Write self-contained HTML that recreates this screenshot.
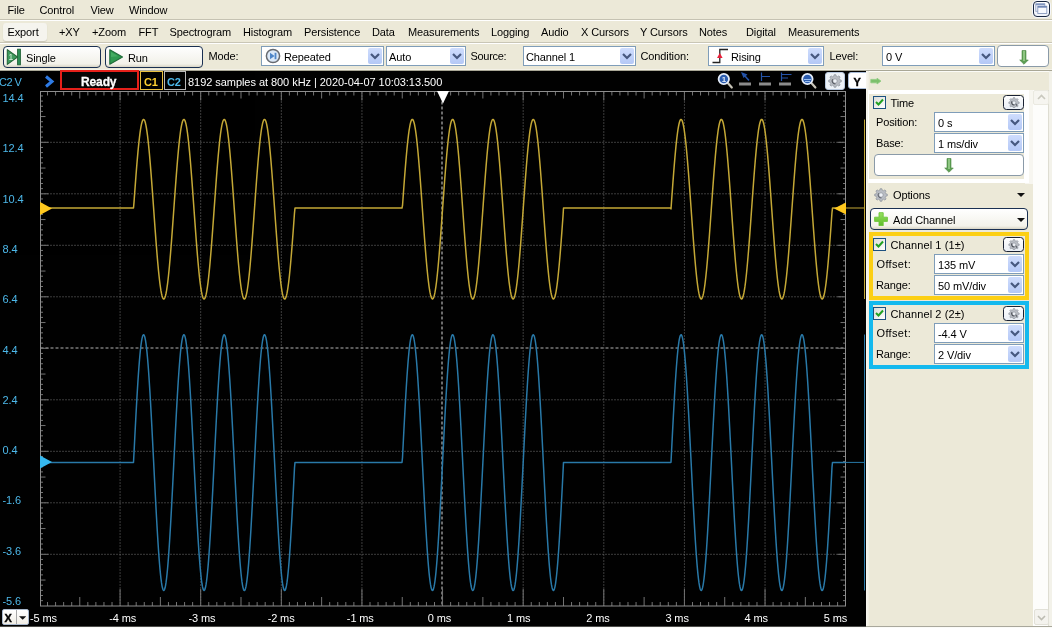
<!DOCTYPE html><html><head><meta charset="utf-8"><title>WaveForms Scope</title><style>
html,body{margin:0;padding:0}
body{width:1052px;height:628px;position:relative;overflow:hidden;background:#ECE9D8;font-family:"Liberation Sans",sans-serif;font-size:11px;color:#000;line-height:13px}
.t{position:absolute;white-space:pre;line-height:13px;height:13px;letter-spacing:-0.12px}
.b{position:absolute;box-sizing:border-box}
.hl{position:absolute;height:1px;left:0;width:1052px}
.combo{position:absolute;box-sizing:border-box;background:#fff;border:1px solid #7F9DB9;height:20px}
.combo .dd{position:absolute;right:1px;top:1px;bottom:1px;width:14px;background:#C1D2FA;border-radius:2px;background:linear-gradient(#CFDDFD,#B4C8F6)}
.combo .dd svg{position:absolute;left:2px;top:5px}
.combo .v{position:absolute;left:4px;top:3px;white-space:pre;letter-spacing:-0.12px}
.btn{position:absolute;box-sizing:border-box;border:1.2px solid #1A3052;border-radius:4px;background:linear-gradient(#FFFFFF,#F3F2EA 85%,#D8D4C4)}
.wbtn{position:absolute;box-sizing:border-box;border:1px solid #8A9AA8;border-radius:4px;background:#fff}
.cb{position:absolute;box-sizing:border-box;width:13px;height:13px;border:1px solid #1C5180;background:linear-gradient(135deg,#DCDCD7,#fff)}
.cb svg{position:absolute;left:1px;top:1px}
.gbtn{position:absolute;box-sizing:border-box;width:21px;height:15px;border:1.3px solid #1A2234;border-radius:3.5px;background:linear-gradient(#FFFFFF,#E9EEF5)}
</style></head><body><div id="app" style="position:absolute;left:0;top:0;width:1052px;height:628px;overflow:hidden;will-change:opacity;opacity:0.999">
<span class="t" style="left:7.5px;top:4px;">File</span>
<span class="t" style="left:39.5px;top:4px;">Control</span>
<span class="t" style="left:90.5px;top:4px;">View</span>
<span class="t" style="left:129px;top:4px;">Window</span>
<div class="hl" style="top:19px;background:#C5C2B2"></div>
<div class="hl" style="top:20px;background:#FFFFFF"></div>
<div class="b" style="left:1032px;top:0px;width:19px;height:18px;border-radius:5px;background:#F4F6FA"></div>
<div class="b" style="left:1033px;top:1px;width:17px;height:16px;border:1.3px solid #1A2840;border-radius:4px;background:linear-gradient(#FFFFFF,#EEF2FA)"></div>
<svg class="b" style="left:1033px;top:1px" width="17" height="16" viewBox="0 0 17 16"><rect x="2.8" y="2.8" width="9" height="7.5" fill="#F2F5FB" stroke="#93A3C4" stroke-width="0.9"/><rect x="2.8" y="2.6" width="9" height="1.6" fill="#8196C0"/><rect x="4.8" y="5.2" width="9" height="7.3" fill="#F7F9FD" stroke="#8A9BBE" stroke-width="0.9"/><rect x="4.8" y="5" width="9" height="1.7" fill="#6F86B4"/></svg>
<div class="b" style="left:3px;top:23px;width:44px;height:18px;border-radius:3px;background:#F6F5EF;box-shadow:0 1px 1px #C9C6B6"></div>
<span class="t" style="left:7.5px;top:26px;">Export</span>
<span class="t" style="left:59px;top:26px;">+XY</span>
<span class="t" style="left:92px;top:26px;">+Zoom</span>
<span class="t" style="left:138.5px;top:26px;">FFT</span>
<span class="t" style="left:169.5px;top:26px;">Spectrogram</span>
<span class="t" style="left:243px;top:26px;">Histogram</span>
<span class="t" style="left:304px;top:26px;">Persistence</span>
<span class="t" style="left:372px;top:26px;">Data</span>
<span class="t" style="left:408px;top:26px;">Measurements</span>
<span class="t" style="left:491px;top:26px;">Logging</span>
<span class="t" style="left:541px;top:26px;">Audio</span>
<span class="t" style="left:581px;top:26px;">X Cursors</span>
<span class="t" style="left:640px;top:26px;">Y Cursors</span>
<span class="t" style="left:699px;top:26px;">Notes</span>
<span class="t" style="left:746px;top:26px;">Digital</span>
<span class="t" style="left:788px;top:26px;">Measurements</span>
<div class="hl" style="top:42px;background:#C9C6B6"></div>
<div class="hl" style="top:43px;background:#FFFFFF"></div>
<div class="btn" style="left:3px;top:46px;width:98px;height:22px"></div>
<div class="btn" style="left:105px;top:46px;width:98px;height:22px"></div>
<svg class="b" style="left:6px;top:48px" width="16" height="18" viewBox="0 0 16 18"><path d="M1.3 1.6 L11.5 9 L1.3 16.4 Z" fill="#3F9A5E" stroke="#27683A" stroke-width="1.1" stroke-linejoin="round"/><rect x="11.6" y="1.2" width="2.8" height="15.6" fill="#2F9058" stroke="#1F6236" stroke-width="0.9"/><text x="2.6" y="12.2" font-size="8.5" font-family="Liberation Sans, sans-serif" fill="#D8F0DC">1</text></svg>
<span class="t" style="left:26px;top:51.5px;">Single</span>
<svg class="b" style="left:108px;top:48px" width="18" height="18" viewBox="0 0 18 18"><path d="M1.8 1.8 L14.5 9 L1.8 16.2 Z" fill="#2F9A50" stroke="#1F6B38" stroke-width="1.1" stroke-linejoin="round"/><path d="M3 4 L10 8.2 L3 9 Z" fill="#4DB36A" opacity="0.7"/></svg>
<span class="t" style="left:128px;top:51.5px;">Run</span>
<span class="t" style="left:208.5px;top:50px;">Mode:</span>
<div class="combo" style="left:261px;top:46px;width:123px;height:20px"><span class="v" style="left:22px;top:3.5px">Repeated</span><div class="dd"><svg width="10" height="7" viewBox="0 0 10 7"><path d="M1 1 L5 5 L9 1" fill="none" stroke="#46587F" stroke-width="2.2"/></svg></div></div>
<svg class="b" style="left:265px;top:48px" width="16" height="16" viewBox="0 0 16 16"><circle cx="8" cy="8" r="6.6" fill="#DCE9F8" stroke="#666A70" stroke-width="1.5"/><path d="M5 4.8 L9.6 8 L5 11.2 Z" fill="#4F86C8"/><rect x="9.6" y="4.8" width="1.8" height="6.4" fill="#4F86C8"/></svg>
<div class="combo" style="left:386px;top:46px;width:80px;height:20px"><span class="v" style="left:2px;top:3.5px">Auto</span><div class="dd"><svg width="10" height="7" viewBox="0 0 10 7"><path d="M1 1 L5 5 L9 1" fill="none" stroke="#46587F" stroke-width="2.2"/></svg></div></div>
<span class="t" style="left:470.5px;top:50px;letter-spacing:-0.3px">Source:</span>
<div class="combo" style="left:523px;top:46px;width:113px;height:20px"><span class="v" style="left:2px;top:3.5px">Channel 1</span><div class="dd"><svg width="10" height="7" viewBox="0 0 10 7"><path d="M1 1 L5 5 L9 1" fill="none" stroke="#46587F" stroke-width="2.2"/></svg></div></div>
<span class="t" style="left:640.5px;top:50px;">Condition:</span>
<div class="combo" style="left:708px;top:46px;width:116px;height:20px"><span class="v" style="left:22px;top:3.5px">Rising</span><div class="dd"><svg width="10" height="7" viewBox="0 0 10 7"><path d="M1 1 L5 5 L9 1" fill="none" stroke="#46587F" stroke-width="2.2"/></svg></div></div>
<svg class="b" style="left:711px;top:48px" width="20" height="17" viewBox="0 0 20 17"><path d="M1.5 14.5 H8.8 V1.5 H17" fill="none" stroke="#222" stroke-width="1.3"/><path d="M8.8 5 L6 10 H11.6 Z" fill="#E8203A"/></svg>
<span class="t" style="left:829.5px;top:50px;">Level:</span>
<div class="combo" style="left:882px;top:46px;width:113px;height:20px"><span class="v" style="left:3px;top:3.5px">0 V</span><div class="dd"><svg width="10" height="7" viewBox="0 0 10 7"><path d="M1 1 L5 5 L9 1" fill="none" stroke="#46587F" stroke-width="2.2"/></svg></div></div>
<div class="wbtn" style="left:997px;top:45px;width:52px;height:22px"></div>
<svg class="b" style="left:1019px;top:49.5px" width="10" height="15" viewBox="0 0 10 15"><path d="M3 0.5 H7 V10 H9.3 L5 14.3 L0.7 10 H3 Z" fill="#5E9E54" stroke="#4C8A44" stroke-width="0.6" stroke-linejoin="round"/><rect x="4.2" y="1" width="1.6" height="10" fill="#9BD08E"/></svg>
<div class="hl" style="top:69px;background:#F4F2E8"></div>
<div class="hl" style="top:70px;background:#A9A796"></div>
<div class="b" style="left:0;top:71px;width:866px;height:555px;background:#000"></div>
<div class="hl" style="top:626px;background:#4C4C4A"></div>
<div class="hl" style="top:627px;background:#FBFBF8"></div>
<svg class="b" style="left:0;top:0" width="1052" height="628" viewBox="0 0 1052 628">
<path d="M442 91.5 V606 M40.5 348 H845.5" fill="none" stroke="#B4B4B4" stroke-width="1.2" stroke-dasharray="3 2"/>
<path d="M120.08 92.5 V606 M200.7 92.5 V606 M281.32 92.5 V606 M361.94 92.5 V606 M523.18 92.5 V606 M603.8 92.5 V606 M684.42 92.5 V606 M765.04 92.5 V606" fill="none" stroke="#7A7A7A" stroke-dasharray="1 2"/>
<path d="M41.5 142.3 H845.5 M41.5 193.8 H845.5 M41.5 245.3 H845.5 M41.5 296.8 H845.5 M41.5 399.8 H845.5 M41.5 451.3 H845.5 M41.5 502.8 H845.5 M41.5 554.3 H845.5" fill="none" stroke="#7A7A7A" stroke-dasharray="1 2"/>
<path d="M47.52 91.5 v4 M47.52 606 v-4 M40.5 95.95 h2.5 M845.5 95.95 h-2.5 M55.58 91.5 v4 M55.58 606 v-4 M40.5 101.1 h2.5 M845.5 101.1 h-2.5 M63.65 91.5 v4 M63.65 606 v-4 M40.5 106.25 h2.5 M845.5 106.25 h-2.5 M71.71 91.5 v4 M71.71 606 v-4 M40.5 111.4 h2.5 M845.5 111.4 h-2.5 M79.77 91.5 v7 M79.77 606 v-9 M40.5 116.55 h5 M845.5 116.55 h-5 M87.83 91.5 v4 M87.83 606 v-4 M40.5 121.7 h2.5 M845.5 121.7 h-2.5 M95.89 91.5 v4 M95.89 606 v-4 M40.5 126.85 h2.5 M845.5 126.85 h-2.5 M103.96 91.5 v4 M103.96 606 v-4 M40.5 132.0 h2.5 M845.5 132.0 h-2.5 M112.02 91.5 v4 M112.02 606 v-4 M40.5 137.15 h2.5 M845.5 137.15 h-2.5 M120.08 91.5 v9 M120.08 606 v-17 M40.5 142.3 h8 M845.5 142.3 h-8 M128.14 91.5 v4 M128.14 606 v-4 M40.5 147.45 h2.5 M845.5 147.45 h-2.5 M136.2 91.5 v4 M136.2 606 v-4 M40.5 152.6 h2.5 M845.5 152.6 h-2.5 M144.27 91.5 v4 M144.27 606 v-4 M40.5 157.75 h2.5 M845.5 157.75 h-2.5 M152.33 91.5 v4 M152.33 606 v-4 M40.5 162.9 h2.5 M845.5 162.9 h-2.5 M160.39 91.5 v7 M160.39 606 v-9 M40.5 168.05 h5 M845.5 168.05 h-5 M168.45 91.5 v4 M168.45 606 v-4 M40.5 173.2 h2.5 M845.5 173.2 h-2.5 M176.51 91.5 v4 M176.51 606 v-4 M40.5 178.35 h2.5 M845.5 178.35 h-2.5 M184.58 91.5 v4 M184.58 606 v-4 M40.5 183.5 h2.5 M845.5 183.5 h-2.5 M192.64 91.5 v4 M192.64 606 v-4 M40.5 188.65 h2.5 M845.5 188.65 h-2.5 M200.7 91.5 v9 M200.7 606 v-17 M40.5 193.8 h8 M845.5 193.8 h-8 M208.76 91.5 v4 M208.76 606 v-4 M40.5 198.95 h2.5 M845.5 198.95 h-2.5 M216.82 91.5 v4 M216.82 606 v-4 M40.5 204.1 h2.5 M845.5 204.1 h-2.5 M224.89 91.5 v4 M224.89 606 v-4 M40.5 209.25 h2.5 M845.5 209.25 h-2.5 M232.95 91.5 v4 M232.95 606 v-4 M40.5 214.4 h2.5 M845.5 214.4 h-2.5 M241.01 91.5 v7 M241.01 606 v-9 M40.5 219.55 h5 M845.5 219.55 h-5 M249.07 91.5 v4 M249.07 606 v-4 M40.5 224.7 h2.5 M845.5 224.7 h-2.5 M257.13 91.5 v4 M257.13 606 v-4 M40.5 229.85 h2.5 M845.5 229.85 h-2.5 M265.2 91.5 v4 M265.2 606 v-4 M40.5 235.0 h2.5 M845.5 235.0 h-2.5 M273.26 91.5 v4 M273.26 606 v-4 M40.5 240.15 h2.5 M845.5 240.15 h-2.5 M281.32 91.5 v9 M281.32 606 v-17 M40.5 245.3 h8 M845.5 245.3 h-8 M289.38 91.5 v4 M289.38 606 v-4 M40.5 250.45 h2.5 M845.5 250.45 h-2.5 M297.44 91.5 v4 M297.44 606 v-4 M40.5 255.6 h2.5 M845.5 255.6 h-2.5 M305.51 91.5 v4 M305.51 606 v-4 M40.5 260.75 h2.5 M845.5 260.75 h-2.5 M313.57 91.5 v4 M313.57 606 v-4 M40.5 265.9 h2.5 M845.5 265.9 h-2.5 M321.63 91.5 v7 M321.63 606 v-9 M40.5 271.05 h5 M845.5 271.05 h-5 M329.69 91.5 v4 M329.69 606 v-4 M40.5 276.2 h2.5 M845.5 276.2 h-2.5 M337.75 91.5 v4 M337.75 606 v-4 M40.5 281.35 h2.5 M845.5 281.35 h-2.5 M345.82 91.5 v4 M345.82 606 v-4 M40.5 286.5 h2.5 M845.5 286.5 h-2.5 M353.88 91.5 v4 M353.88 606 v-4 M40.5 291.65 h2.5 M845.5 291.65 h-2.5 M361.94 91.5 v9 M361.94 606 v-17 M40.5 296.8 h8 M845.5 296.8 h-8 M370.0 91.5 v4 M370.0 606 v-4 M40.5 301.95 h2.5 M845.5 301.95 h-2.5 M378.06 91.5 v4 M378.06 606 v-4 M40.5 307.1 h2.5 M845.5 307.1 h-2.5 M386.13 91.5 v4 M386.13 606 v-4 M40.5 312.25 h2.5 M845.5 312.25 h-2.5 M394.19 91.5 v4 M394.19 606 v-4 M40.5 317.4 h2.5 M845.5 317.4 h-2.5 M402.25 91.5 v7 M402.25 606 v-9 M40.5 322.55 h5 M845.5 322.55 h-5 M410.31 91.5 v4 M410.31 606 v-4 M40.5 327.7 h2.5 M845.5 327.7 h-2.5 M418.37 91.5 v4 M418.37 606 v-4 M40.5 332.85 h2.5 M845.5 332.85 h-2.5 M426.44 91.5 v4 M426.44 606 v-4 M40.5 338.0 h2.5 M845.5 338.0 h-2.5 M434.5 91.5 v4 M434.5 606 v-4 M40.5 343.15 h2.5 M845.5 343.15 h-2.5 M442.56 91.5 v9 M442.56 606 v-17 M40.5 348.3 h8 M845.5 348.3 h-8 M450.62 91.5 v4 M450.62 606 v-4 M40.5 353.45 h2.5 M845.5 353.45 h-2.5 M458.68 91.5 v4 M458.68 606 v-4 M40.5 358.6 h2.5 M845.5 358.6 h-2.5 M466.75 91.5 v4 M466.75 606 v-4 M40.5 363.75 h2.5 M845.5 363.75 h-2.5 M474.81 91.5 v4 M474.81 606 v-4 M40.5 368.9 h2.5 M845.5 368.9 h-2.5 M482.87 91.5 v7 M482.87 606 v-9 M40.5 374.05 h5 M845.5 374.05 h-5 M490.93 91.5 v4 M490.93 606 v-4 M40.5 379.2 h2.5 M845.5 379.2 h-2.5 M498.99 91.5 v4 M498.99 606 v-4 M40.5 384.35 h2.5 M845.5 384.35 h-2.5 M507.06 91.5 v4 M507.06 606 v-4 M40.5 389.5 h2.5 M845.5 389.5 h-2.5 M515.12 91.5 v4 M515.12 606 v-4 M40.5 394.65 h2.5 M845.5 394.65 h-2.5 M523.18 91.5 v9 M523.18 606 v-17 M40.5 399.8 h8 M845.5 399.8 h-8 M531.24 91.5 v4 M531.24 606 v-4 M40.5 404.95 h2.5 M845.5 404.95 h-2.5 M539.3 91.5 v4 M539.3 606 v-4 M40.5 410.1 h2.5 M845.5 410.1 h-2.5 M547.37 91.5 v4 M547.37 606 v-4 M40.5 415.25 h2.5 M845.5 415.25 h-2.5 M555.43 91.5 v4 M555.43 606 v-4 M40.5 420.4 h2.5 M845.5 420.4 h-2.5 M563.49 91.5 v7 M563.49 606 v-9 M40.5 425.55 h5 M845.5 425.55 h-5 M571.55 91.5 v4 M571.55 606 v-4 M40.5 430.7 h2.5 M845.5 430.7 h-2.5 M579.61 91.5 v4 M579.61 606 v-4 M40.5 435.85 h2.5 M845.5 435.85 h-2.5 M587.68 91.5 v4 M587.68 606 v-4 M40.5 441.0 h2.5 M845.5 441.0 h-2.5 M595.74 91.5 v4 M595.74 606 v-4 M40.5 446.15 h2.5 M845.5 446.15 h-2.5 M603.8 91.5 v9 M603.8 606 v-17 M40.5 451.3 h8 M845.5 451.3 h-8 M611.86 91.5 v4 M611.86 606 v-4 M40.5 456.45 h2.5 M845.5 456.45 h-2.5 M619.92 91.5 v4 M619.92 606 v-4 M40.5 461.6 h2.5 M845.5 461.6 h-2.5 M627.99 91.5 v4 M627.99 606 v-4 M40.5 466.75 h2.5 M845.5 466.75 h-2.5 M636.05 91.5 v4 M636.05 606 v-4 M40.5 471.9 h2.5 M845.5 471.9 h-2.5 M644.11 91.5 v7 M644.11 606 v-9 M40.5 477.05 h5 M845.5 477.05 h-5 M652.17 91.5 v4 M652.17 606 v-4 M40.5 482.2 h2.5 M845.5 482.2 h-2.5 M660.23 91.5 v4 M660.23 606 v-4 M40.5 487.35 h2.5 M845.5 487.35 h-2.5 M668.3 91.5 v4 M668.3 606 v-4 M40.5 492.5 h2.5 M845.5 492.5 h-2.5 M676.36 91.5 v4 M676.36 606 v-4 M40.5 497.65 h2.5 M845.5 497.65 h-2.5 M684.42 91.5 v9 M684.42 606 v-17 M40.5 502.8 h8 M845.5 502.8 h-8 M692.48 91.5 v4 M692.48 606 v-4 M40.5 507.95 h2.5 M845.5 507.95 h-2.5 M700.54 91.5 v4 M700.54 606 v-4 M40.5 513.1 h2.5 M845.5 513.1 h-2.5 M708.61 91.5 v4 M708.61 606 v-4 M40.5 518.25 h2.5 M845.5 518.25 h-2.5 M716.67 91.5 v4 M716.67 606 v-4 M40.5 523.4 h2.5 M845.5 523.4 h-2.5 M724.73 91.5 v7 M724.73 606 v-9 M40.5 528.55 h5 M845.5 528.55 h-5 M732.79 91.5 v4 M732.79 606 v-4 M40.5 533.7 h2.5 M845.5 533.7 h-2.5 M740.85 91.5 v4 M740.85 606 v-4 M40.5 538.85 h2.5 M845.5 538.85 h-2.5 M748.92 91.5 v4 M748.92 606 v-4 M40.5 544.0 h2.5 M845.5 544.0 h-2.5 M756.98 91.5 v4 M756.98 606 v-4 M40.5 549.15 h2.5 M845.5 549.15 h-2.5 M765.04 91.5 v9 M765.04 606 v-17 M40.5 554.3 h8 M845.5 554.3 h-8 M773.1 91.5 v4 M773.1 606 v-4 M40.5 559.45 h2.5 M845.5 559.45 h-2.5 M781.16 91.5 v4 M781.16 606 v-4 M40.5 564.6 h2.5 M845.5 564.6 h-2.5 M789.23 91.5 v4 M789.23 606 v-4 M40.5 569.75 h2.5 M845.5 569.75 h-2.5 M797.29 91.5 v4 M797.29 606 v-4 M40.5 574.9 h2.5 M845.5 574.9 h-2.5 M805.35 91.5 v7 M805.35 606 v-9 M40.5 580.05 h5 M845.5 580.05 h-5 M813.41 91.5 v4 M813.41 606 v-4 M40.5 585.2 h2.5 M845.5 585.2 h-2.5 M821.47 91.5 v4 M821.47 606 v-4 M40.5 590.35 h2.5 M845.5 590.35 h-2.5 M829.54 91.5 v4 M829.54 606 v-4 M40.5 595.5 h2.5 M845.5 595.5 h-2.5 M837.6 91.5 v4 M837.6 606 v-4 M40.5 600.65 h2.5 M845.5 600.65 h-2.5" fill="none" stroke="#747474"/>
<rect x="40.5" y="91.5" width="805.0" height="514.5" fill="none" stroke="#8E8E8E"/>
</svg>
<svg class="b" style="left:0;top:0" width="1052" height="628" viewBox="0 0 1052 628">
<path d="M40.5 208.0 L133.5 208.0 L134.0 202.4 L134.5 195.5 L135.0 188.6 L135.5 181.9 L136.0 175.3 L136.5 168.9 L137.0 162.8 L137.5 157.0 L138.0 151.4 L138.5 146.3 L139.0 141.5 L139.5 137.1 L140.0 133.1 L140.5 129.6 L141.0 126.6 L141.5 124.1 L142.0 122.2 L142.5 120.7 L143.0 119.8 L143.5 119.4 L144.0 119.6 L144.5 120.3 L145.0 121.5 L145.5 123.3 L146.0 125.6 L146.5 128.5 L147.0 131.8 L147.5 135.5 L148.0 139.8 L148.5 144.4 L149.0 149.4 L149.5 154.8 L150.0 160.6 L150.5 166.6 L151.0 172.9 L151.5 179.4 L152.0 186.1 L152.5 192.9 L153.0 199.8 L153.5 206.8 L154.0 213.8 L154.5 220.8 L155.0 227.7 L155.5 234.4 L156.0 241.1 L156.5 247.5 L157.0 253.7 L157.5 259.7 L158.0 265.3 L158.5 270.6 L159.0 275.5 L159.5 280.0 L160.0 284.1 L160.5 287.7 L161.0 290.9 L161.5 293.5 L162.0 295.7 L162.5 297.3 L163.0 298.4 L163.5 298.9 L164.0 298.9 L164.5 298.4 L165.0 297.3 L165.5 295.7 L166.0 293.5 L166.5 290.9 L167.0 287.7 L167.5 284.1 L168.0 280.0 L168.5 275.5 L169.0 270.6 L169.5 265.3 L170.0 259.6 L170.5 253.7 L171.0 247.5 L171.5 241.1 L172.0 234.4 L172.5 227.6 L173.0 220.7 L173.5 213.8 L174.0 206.8 L174.5 199.8 L175.0 192.9 L175.5 186.0 L176.0 179.4 L176.5 172.9 L177.0 166.6 L177.5 160.5 L178.0 154.8 L178.5 149.4 L179.0 144.4 L179.5 139.7 L180.0 135.5 L180.5 131.7 L181.0 128.4 L181.5 125.6 L182.0 123.3 L182.5 121.5 L183.0 120.3 L183.5 119.6 L184.0 119.4 L184.5 119.8 L185.0 120.7 L185.5 122.2 L186.0 124.1 L186.5 126.7 L187.0 129.7 L187.5 133.1 L188.0 137.1 L188.5 141.5 L189.0 146.3 L189.5 151.4 L190.0 157.0 L190.5 162.8 L191.0 169.0 L191.5 175.3 L192.0 181.9 L192.5 188.6 L193.0 195.5 L193.5 202.5 L194.0 209.5 L194.5 216.4 L195.0 223.4 L195.5 230.3 L196.0 237.0 L196.5 243.6 L197.0 249.9 L197.5 256.0 L198.0 261.8 L198.5 267.3 L199.0 272.5 L199.5 277.3 L200.0 281.6 L200.5 285.5 L201.0 289.0 L201.5 291.9 L202.0 294.4 L202.5 296.4 L203.0 297.8 L203.5 298.7 L204.0 299.0 L204.5 298.8 L205.0 298.0 L205.5 296.7 L206.0 294.9 L206.5 292.6 L207.0 289.7 L207.5 286.4 L208.0 282.6 L208.5 278.3 L209.0 273.7 L209.5 268.6 L210.0 263.2 L210.5 257.4 L211.0 251.4 L211.5 245.1 L212.0 238.6 L212.5 231.9 L213.0 225.0 L213.5 218.1 L214.0 211.1 L214.5 204.1 L215.0 197.2 L215.5 190.3 L216.0 183.5 L216.5 176.9 L217.0 170.4 L217.5 164.2 L218.0 158.3 L218.5 152.7 L219.0 147.5 L219.5 142.6 L220.0 138.1 L220.5 134.0 L221.0 130.4 L221.5 127.3 L222.0 124.7 L222.5 122.6 L223.0 121.0 L223.5 120.0 L224.0 119.5 L224.5 119.5 L225.0 120.1 L225.5 121.2 L226.0 122.9 L226.5 125.0 L227.0 127.7 L227.5 130.9 L228.0 134.6 L228.5 138.7 L229.0 143.2 L229.5 148.2 L230.0 153.5 L230.5 159.2 L231.0 165.1 L231.5 171.3 L232.0 177.8 L232.5 184.4 L233.0 191.2 L233.5 198.1 L234.0 205.1 L234.5 212.1 L235.0 219.1 L235.5 226.0 L236.0 232.8 L236.5 239.5 L237.0 246.0 L237.5 252.3 L238.0 258.3 L238.5 264.0 L239.0 269.3 L239.5 274.4 L240.0 279.0 L240.5 283.2 L241.0 286.9 L241.5 290.2 L242.0 292.9 L242.5 295.2 L243.0 297.0 L243.5 298.2 L244.0 298.9 L244.5 299.0 L245.0 298.6 L245.5 297.6 L246.0 296.1 L246.5 294.1 L247.0 291.6 L247.5 288.5 L248.0 285.0 L248.5 281.0 L249.0 276.6 L249.5 271.8 L250.0 266.6 L250.5 261.0 L251.0 255.2 L251.5 249.0 L252.0 242.6 L252.5 236.0 L253.0 229.3 L253.5 222.4 L254.0 215.4 L254.5 208.5 L255.0 201.5 L255.5 194.5 L256.0 187.7 L256.5 180.9 L257.0 174.4 L257.5 168.1 L258.0 162.0 L258.5 156.2 L259.0 150.7 L259.5 145.6 L260.0 140.8 L260.5 136.5 L261.0 132.6 L261.5 129.2 L262.0 126.3 L262.5 123.8 L263.0 121.9 L263.5 120.5 L264.0 119.7 L264.5 119.4 L265.0 119.6 L265.5 120.4 L266.0 121.8 L266.5 123.6 L267.0 126.0 L267.5 128.9 L268.0 132.3 L268.5 136.1 L269.0 140.4 L269.5 145.1 L270.0 150.2 L270.5 155.6 L271.0 161.4 L271.5 167.5 L272.0 173.8 L272.5 180.3 L273.0 187.0 L273.5 193.9 L274.0 200.8 L274.5 207.8 L275.0 214.8 L275.5 221.7 L276.0 228.6 L276.5 235.4 L277.0 242.0 L277.5 248.4 L278.0 254.6 L278.5 260.5 L279.0 266.1 L279.5 271.3 L280.0 276.2 L280.5 280.6 L281.0 284.6 L281.5 288.2 L282.0 291.3 L282.5 293.9 L283.0 295.9 L283.5 297.5 L284.0 298.5 L284.5 299.0 L285.0 298.9 L285.5 298.3 L286.0 297.1 L286.5 295.4 L287.0 293.2 L287.5 290.5 L288.0 287.2 L288.5 283.5 L289.0 279.4 L289.5 274.8 L290.0 269.8 L290.5 264.5 L291.0 258.8 L291.5 252.9 L292.0 246.6 L292.5 240.1 L293.0 233.5 L293.5 226.7 L294.0 219.8 L294.5 212.8 L295.0 208.0 L402.0 208.0 L402.5 205.7 L403.0 198.7 L403.5 191.8 L404.0 185.0 L404.5 178.3 L405.0 171.9 L405.5 165.6 L406.0 159.6 L406.5 154.0 L407.0 148.6 L407.5 143.6 L408.0 139.1 L408.5 134.9 L409.0 131.2 L409.5 128.0 L410.0 125.2 L410.5 123.0 L411.0 121.3 L411.5 120.1 L412.0 119.5 L412.5 119.4 L413.0 119.9 L413.5 120.9 L414.0 122.4 L414.5 124.5 L415.0 127.1 L415.5 130.2 L416.0 133.7 L416.5 137.7 L417.0 142.2 L417.5 147.0 L418.0 152.3 L418.5 157.9 L419.0 163.7 L419.5 169.9 L420.0 176.3 L420.5 182.9 L421.0 189.7 L421.5 196.6 L422.0 203.5 L422.5 210.5 L423.0 217.5 L423.5 224.5 L424.0 231.3 L424.5 238.0 L425.0 244.5 L425.5 250.9 L426.0 256.9 L426.5 262.7 L427.0 268.2 L427.5 273.3 L428.0 278.0 L428.5 282.2 L429.0 286.1 L429.5 289.5 L430.0 292.4 L430.5 294.7 L431.0 296.6 L431.5 297.9 L432.0 298.7 L432.5 299.0 L433.0 298.7 L433.5 297.9 L434.0 296.5 L434.5 294.6 L435.0 292.2 L435.5 289.2 L436.0 285.8 L436.5 282.0 L437.0 277.6 L437.5 272.9 L438.0 267.8 L438.5 262.3 L439.0 256.5 L439.5 250.4 L440.0 244.1 L440.5 237.5 L441.0 230.8 L441.5 224.0 L442.0 217.0 L442.5 210.0 L443.0 203.0 L443.5 196.1 L444.0 189.2 L444.5 182.5 L445.0 175.9 L445.5 169.5 L446.0 163.3 L446.5 157.5 L447.0 151.9 L447.5 146.7 L448.0 141.9 L448.5 137.4 L449.0 133.5 L449.5 129.9 L450.0 126.9 L450.5 124.3 L451.0 122.3 L451.5 120.8 L452.0 119.8 L452.5 119.4 L453.0 119.5 L453.5 120.2 L454.0 121.4 L454.5 123.2 L455.0 125.4 L455.5 128.2 L456.0 131.5 L456.5 135.2 L457.0 139.4 L457.5 144.0 L458.0 149.0 L458.5 154.4 L459.0 160.1 L459.5 166.1 L460.0 172.3 L460.5 178.8 L461.0 185.5 L461.5 192.3 L462.0 199.2 L462.5 206.2 L463.0 213.2 L463.5 220.2 L464.0 227.1 L464.5 233.9 L465.0 240.5 L465.5 247.0 L466.0 253.2 L466.5 259.2 L467.0 264.8 L467.5 270.1 L468.0 275.1 L468.5 279.6 L469.0 283.8 L469.5 287.4 L470.0 290.6 L470.5 293.3 L471.0 295.5 L471.5 297.2 L472.0 298.3 L472.5 298.9 L473.0 299.0 L473.5 298.5 L474.0 297.4 L474.5 295.8 L475.0 293.7 L475.5 291.1 L476.0 288.0 L476.5 284.4 L477.0 280.4 L477.5 275.9 L478.0 271.0 L478.5 265.7 L479.0 260.1 L479.5 254.2 L480.0 248.0 L480.5 241.6 L481.0 235.0 L481.5 228.2 L482.0 221.3 L482.5 214.4 L483.0 207.4 L483.5 200.4 L484.0 193.5 L484.5 186.6 L485.0 179.9 L485.5 173.4 L486.0 167.1 L486.5 161.1 L487.0 155.3 L487.5 149.9 L488.0 144.8 L488.5 140.1 L489.0 135.9 L489.5 132.1 L490.0 128.7 L490.5 125.9 L491.0 123.5 L491.5 121.7 L492.0 120.4 L492.5 119.6 L493.0 119.4 L493.5 119.7 L494.0 120.6 L494.5 122.0 L495.0 124.0 L495.5 126.4 L496.0 129.4 L496.5 132.8 L497.0 136.7 L497.5 141.1 L498.0 145.8 L498.5 151.0 L499.0 156.5 L499.5 162.3 L500.0 168.4 L500.5 174.8 L501.0 181.3 L501.5 188.1 L502.0 194.9 L502.5 201.9 L503.0 208.9 L503.5 215.8 L504.0 222.8 L504.5 229.7 L505.0 236.4 L505.5 243.0 L506.0 249.4 L506.5 255.5 L507.0 261.3 L507.5 266.9 L508.0 272.1 L508.5 276.9 L509.0 281.3 L509.5 285.2 L510.0 288.7 L510.5 291.7 L511.0 294.2 L511.5 296.2 L512.0 297.7 L512.5 298.6 L513.0 299.0 L513.5 298.8 L514.0 298.1 L514.5 296.9 L515.0 295.1 L515.5 292.8 L516.0 290.0 L516.5 286.7 L517.0 282.9 L517.5 278.7 L518.0 274.1 L518.5 269.1 L519.0 263.7 L519.5 257.9 L520.0 251.9 L520.5 245.6 L521.0 239.1 L521.5 232.4 L522.0 225.6 L522.5 218.7 L523.0 211.7 L523.5 204.7 L524.0 197.8 L524.5 190.9 L525.0 184.1 L525.5 177.4 L526.0 171.0 L526.5 164.8 L527.0 158.8 L527.5 153.2 L528.0 147.9 L528.5 143.0 L529.0 138.5 L529.5 134.4 L530.0 130.7 L530.5 127.6 L531.0 124.9 L531.5 122.7 L532.0 121.1 L532.5 120.0 L533.0 119.5 L533.5 119.5 L534.0 120.0 L534.5 121.1 L535.0 122.7 L535.5 124.8 L536.0 127.5 L536.5 130.6 L537.0 134.3 L537.5 138.3 L538.0 142.8 L538.5 147.8 L539.0 153.0 L539.5 158.7 L540.0 164.6 L540.5 170.8 L541.0 177.2 L541.5 183.9 L542.0 190.6 L542.5 197.5 L543.0 204.5 L543.5 211.5 L544.0 218.5 L544.5 225.4 L545.0 232.2 L545.5 238.9 L546.0 245.4 L546.5 251.7 L547.0 257.8 L547.5 263.5 L548.0 268.9 L548.5 273.9 L549.0 278.6 L549.5 282.8 L550.0 286.6 L550.5 289.9 L551.0 292.7 L551.5 295.0 L552.0 296.8 L552.5 298.1 L553.0 298.8 L553.5 299.0 L554.0 298.6 L554.5 297.7 L555.0 296.3 L555.5 294.3 L556.0 291.8 L556.5 288.8 L557.0 285.3 L557.5 281.4 L558.0 277.0 L558.5 272.2 L559.0 267.0 L559.5 261.5 L560.0 255.7 L560.5 249.6 L561.0 243.2 L561.5 236.6 L562.0 229.9 L562.5 223.0 L563.0 216.1 L563.5 208.0 L670.5 208.0 L671.0 209.0 L671.5 202.0 L672.0 195.0 L672.5 188.2 L673.0 181.4 L673.5 174.9 L674.0 168.5 L674.5 162.4 L675.0 156.6 L675.5 151.1 L676.0 145.9 L676.5 141.2 L677.0 136.8 L677.5 132.9 L678.0 129.4 L678.5 126.5 L679.0 124.0 L679.5 122.0 L680.0 120.6 L680.5 119.7 L681.0 119.4 L681.5 119.6 L682.0 120.4 L682.5 121.6 L683.0 123.5 L683.5 125.8 L684.0 128.7 L684.5 132.0 L685.0 135.8 L685.5 140.1 L686.0 144.7 L686.5 149.8 L687.0 155.2 L687.5 161.0 L688.0 167.0 L688.5 173.3 L689.0 179.8 L689.5 186.5 L690.0 193.3 L690.5 200.3 L691.0 207.3 L691.5 214.3 L692.0 221.2 L692.5 228.1 L693.0 234.9 L693.5 241.5 L694.0 247.9 L694.5 254.1 L695.0 260.0 L695.5 265.7 L696.0 270.9 L696.5 275.8 L697.0 280.3 L697.5 284.4 L698.0 288.0 L698.5 291.1 L699.0 293.7 L699.5 295.8 L700.0 297.4 L700.5 298.4 L701.0 298.9 L701.5 298.9 L702.0 298.3 L702.5 297.2 L703.0 295.5 L703.5 293.4 L704.0 290.7 L704.5 287.5 L705.0 283.8 L705.5 279.7 L706.0 275.2 L706.5 270.2 L707.0 264.9 L707.5 259.3 L708.0 253.3 L708.5 247.1 L709.0 240.6 L709.5 234.0 L710.0 227.2 L710.5 220.3 L711.0 213.3 L711.5 206.3 L712.0 199.3 L712.5 192.4 L713.0 185.6 L713.5 178.9 L714.0 172.4 L714.5 166.2 L715.0 160.2 L715.5 154.4 L716.0 149.1 L716.5 144.1 L717.0 139.4 L717.5 135.3 L718.0 131.5 L718.5 128.2 L719.0 125.5 L719.5 123.2 L720.0 121.4 L720.5 120.2 L721.0 119.5 L721.5 119.4 L722.0 119.8 L722.5 120.8 L723.0 122.3 L723.5 124.3 L724.0 126.8 L724.5 129.9 L725.0 133.4 L725.5 137.4 L726.0 141.8 L726.5 146.6 L727.0 151.8 L727.5 157.4 L728.0 163.2 L728.5 169.4 L729.0 175.8 L729.5 182.3 L730.0 189.1 L730.5 196.0 L731.0 202.9 L731.5 209.9 L732.0 216.9 L732.5 223.9 L733.0 230.7 L733.5 237.4 L734.0 244.0 L734.5 250.3 L735.0 256.4 L735.5 262.2 L736.0 267.7 L736.5 272.8 L737.0 277.6 L737.5 281.9 L738.0 285.8 L738.5 289.2 L739.0 292.1 L739.5 294.6 L740.0 296.5 L740.5 297.9 L741.0 298.7 L741.5 299.0 L742.0 298.8 L742.5 298.0 L743.0 296.6 L743.5 294.8 L744.0 292.4 L744.5 289.5 L745.0 286.2 L745.5 282.3 L746.0 278.0 L746.5 273.3 L747.0 268.2 L747.5 262.8 L748.0 257.0 L748.5 251.0 L749.0 244.6 L749.5 238.1 L750.0 231.4 L750.5 224.6 L751.0 217.6 L751.5 210.6 L752.0 203.7 L752.5 196.7 L753.0 189.8 L753.5 183.0 L754.0 176.4 L754.5 170.0 L755.0 163.8 L755.5 157.9 L756.0 152.4 L756.5 147.1 L757.0 142.3 L757.5 137.8 L758.0 133.8 L758.5 130.2 L759.0 127.1 L759.5 124.5 L760.0 122.5 L760.5 120.9 L761.0 119.9 L761.5 119.4 L762.0 119.5 L762.5 120.1 L763.0 121.3 L763.5 123.0 L764.0 125.2 L764.5 127.9 L765.0 131.2 L765.5 134.8 L766.0 139.0 L766.5 143.6 L767.0 148.5 L767.5 153.9 L768.0 159.6 L768.5 165.5 L769.0 171.8 L769.5 178.2 L770.0 184.9 L770.5 191.7 L771.0 198.6 L771.5 205.6 L772.0 212.6 L772.5 219.6 L773.0 226.5 L773.5 233.3 L774.0 239.9 L774.5 246.4 L775.0 252.7 L775.5 258.7 L776.0 264.3 L776.5 269.7 L777.0 274.7 L777.5 279.3 L778.0 283.4 L778.5 287.1 L779.0 290.4 L779.5 293.1 L780.0 295.3 L780.5 297.1 L781.0 298.2 L781.5 298.9 L782.0 299.0 L782.5 298.5 L783.0 297.5 L783.5 296.0 L784.0 293.9 L784.5 291.4 L785.0 288.3 L785.5 284.7 L786.0 280.7 L786.5 276.3 L787.0 271.4 L787.5 266.2 L788.0 260.6 L788.5 254.8 L789.0 248.6 L789.5 242.2 L790.0 235.6 L790.5 228.8 L791.0 221.9 L791.5 215.0 L792.0 208.0 L792.5 201.0 L793.0 194.1 L793.5 187.2 L794.0 180.5 L794.5 174.0 L795.0 167.6 L795.5 161.6 L796.0 155.8 L796.5 150.3 L797.0 145.2 L797.5 140.5 L798.0 136.2 L798.5 132.4 L799.0 129.0 L799.5 126.1 L800.0 123.7 L800.5 121.8 L801.0 120.5 L801.5 119.7 L802.0 119.4 L802.5 119.7 L803.0 120.5 L803.5 121.9 L804.0 123.8 L804.5 126.2 L805.0 129.1 L805.5 132.5 L806.0 136.4 L806.5 140.7 L807.0 145.4 L807.5 150.5 L808.0 156.0 L808.5 161.8 L809.0 167.9 L809.5 174.2 L810.0 180.7 L810.5 187.5 L811.0 194.3 L811.5 201.3 L812.0 208.2 L812.5 215.2 L813.0 222.2 L813.5 229.1 L814.0 235.8 L814.5 242.4 L815.0 248.8 L815.5 255.0 L816.0 260.9 L816.5 266.4 L817.0 271.6 L817.5 276.5 L818.0 280.9 L818.5 284.9 L819.0 288.4 L819.5 291.5 L820.0 294.0 L820.5 296.1 L821.0 297.6 L821.5 298.5 L822.0 299.0 L822.5 298.9 L823.0 298.2 L823.5 297.0 L824.0 295.3 L824.5 293.0 L825.0 290.3 L825.5 287.0 L826.0 283.3 L826.5 279.1 L827.0 274.5 L827.5 269.5 L828.0 264.1 L828.5 258.4 L829.0 252.4 L829.5 246.2 L830.0 239.7 L830.5 233.0 L831.0 226.2 L831.5 219.3 L832.0 212.3 L832.5 208.0 L845.5 208.0" fill="none" stroke="#C4A836" stroke-width="1.5" stroke-linejoin="round"/>
<path d="M40.5 462.4 L133.5 462.4 L134.0 453.0 L134.5 443.1 L135.0 433.3 L135.5 423.7 L136.0 414.3 L136.5 405.2 L137.0 396.5 L137.5 388.2 L138.0 380.3 L138.5 372.9 L139.0 366.1 L139.5 359.9 L140.0 354.3 L140.5 349.3 L141.0 345.0 L141.5 341.5 L142.0 338.6 L142.5 336.6 L143.0 335.2 L143.5 334.7 L144.0 335.0 L144.5 336.0 L145.0 337.8 L145.5 340.3 L146.0 343.6 L146.5 347.6 L147.0 352.3 L147.5 357.7 L148.0 363.7 L148.5 370.3 L149.0 377.5 L149.5 385.2 L150.0 393.3 L150.5 401.9 L151.0 410.9 L151.5 420.1 L152.0 429.6 L152.5 439.4 L153.0 449.2 L153.5 459.2 L154.0 469.1 L154.5 479.1 L155.0 488.9 L155.5 498.6 L156.0 508.0 L156.5 517.2 L157.0 526.0 L157.5 534.5 L158.0 542.5 L158.5 550.0 L159.0 557.0 L159.5 563.5 L160.0 569.3 L160.5 574.4 L161.0 578.9 L161.5 582.7 L162.0 585.8 L162.5 588.1 L163.0 589.6 L163.5 590.4 L164.0 590.4 L164.5 589.6 L165.0 588.1 L165.5 585.8 L166.0 582.7 L166.5 578.9 L167.0 574.4 L167.5 569.3 L168.0 563.4 L168.5 557.0 L169.0 550.0 L169.5 542.5 L170.0 534.4 L170.5 526.0 L171.0 517.1 L171.5 508.0 L172.0 498.5 L172.5 488.9 L173.0 479.0 L173.5 469.1 L174.0 459.1 L174.5 449.2 L175.0 439.3 L175.5 429.6 L176.0 420.1 L176.5 410.8 L177.0 401.9 L177.5 393.3 L178.0 385.1 L178.5 377.5 L179.0 370.3 L179.5 363.7 L180.0 357.7 L180.5 352.3 L181.0 347.6 L181.5 343.6 L182.0 340.3 L182.5 337.8 L183.0 336.0 L183.5 335.0 L184.0 334.7 L184.5 335.3 L185.0 336.6 L185.5 338.6 L186.0 341.5 L186.5 345.0 L187.0 349.3 L187.5 354.3 L188.0 359.9 L188.5 366.1 L189.0 373.0 L189.5 380.3 L190.0 388.2 L190.5 396.5 L191.0 405.3 L191.5 414.4 L192.0 423.7 L192.5 433.3 L193.0 443.1 L193.5 453.0 L194.0 463.0 L194.5 472.9 L195.0 482.8 L195.5 492.6 L196.0 502.2 L196.5 511.5 L197.0 520.6 L197.5 529.3 L198.0 537.6 L198.5 545.4 L199.0 552.8 L199.5 559.5 L200.0 565.7 L200.5 571.3 L201.0 576.2 L201.5 580.5 L202.0 584.0 L202.5 586.7 L203.0 588.8 L203.5 590.0 L204.0 590.5 L204.5 590.2 L205.0 589.1 L205.5 587.3 L206.0 584.7 L206.5 581.4 L207.0 577.3 L207.5 572.5 L208.0 567.1 L208.5 561.1 L209.0 554.4 L209.5 547.2 L210.0 539.5 L210.5 531.3 L211.0 522.7 L211.5 513.7 L212.0 504.4 L212.5 494.9 L213.0 485.1 L213.5 475.3 L214.0 465.3 L214.5 455.4 L215.0 445.4 L215.5 435.6 L216.0 426.0 L216.5 416.5 L217.0 407.4 L217.5 398.6 L218.0 390.2 L218.5 382.2 L219.0 374.7 L219.5 367.7 L220.0 361.3 L220.5 355.5 L221.0 350.4 L221.5 346.0 L222.0 342.2 L222.5 339.2 L223.0 337.0 L223.5 335.5 L224.0 334.8 L224.5 334.8 L225.0 335.7 L225.5 337.3 L226.0 339.6 L226.5 342.7 L227.0 346.6 L227.5 351.1 L228.0 356.3 L228.5 362.2 L229.0 368.7 L229.5 375.7 L230.0 383.3 L230.5 391.3 L231.0 399.8 L231.5 408.7 L232.0 417.9 L232.5 427.3 L233.0 437.0 L233.5 446.9 L234.0 456.8 L234.5 466.8 L235.0 476.7 L235.5 486.5 L236.0 496.3 L236.5 505.8 L237.0 515.0 L237.5 523.9 L238.0 532.5 L238.5 540.6 L239.0 548.3 L239.5 555.4 L240.0 562.0 L240.5 567.9 L241.0 573.3 L241.5 577.9 L242.0 581.9 L242.5 585.1 L243.0 587.6 L243.5 589.3 L244.0 590.3 L244.5 590.5 L245.0 589.9 L245.5 588.5 L246.0 586.4 L246.5 583.5 L247.0 579.9 L247.5 575.6 L248.0 570.6 L248.5 564.9 L249.0 558.6 L249.5 551.7 L250.0 544.3 L250.5 536.4 L251.0 528.1 L251.5 519.3 L252.0 510.2 L252.5 500.8 L253.0 491.2 L253.5 481.4 L254.0 471.5 L254.5 461.5 L255.0 451.6 L255.5 441.7 L256.0 431.9 L256.5 422.4 L257.0 413.0 L257.5 404.0 L258.0 395.3 L258.5 387.1 L259.0 379.3 L259.5 372.0 L260.0 365.2 L260.5 359.0 L261.0 353.5 L261.5 348.6 L262.0 344.5 L262.5 341.0 L263.0 338.3 L263.5 336.3 L264.0 335.1 L264.5 334.7 L265.0 335.1 L265.5 336.2 L266.0 338.1 L266.5 340.7 L267.0 344.1 L267.5 348.2 L268.0 353.0 L268.5 358.5 L269.0 364.6 L269.5 371.3 L270.0 378.5 L270.5 386.3 L271.0 394.5 L271.5 403.1 L272.0 412.1 L272.5 421.4 L273.0 431.0 L273.5 440.7 L274.0 450.6 L274.5 460.6 L275.0 470.5 L275.5 480.5 L276.0 490.3 L276.5 499.9 L277.0 509.3 L277.5 518.4 L278.0 527.2 L278.5 535.6 L279.0 543.6 L279.5 551.0 L280.0 558.0 L280.5 564.3 L281.0 570.0 L281.5 575.1 L282.0 579.5 L282.5 583.2 L283.0 586.1 L283.5 588.3 L284.0 589.8 L284.5 590.5 L285.0 590.3 L285.5 589.5 L286.0 587.8 L286.5 585.4 L287.0 582.2 L287.5 578.3 L288.0 573.7 L288.5 568.5 L289.0 562.6 L289.5 556.1 L290.0 549.0 L290.5 541.4 L291.0 533.3 L291.5 524.8 L292.0 515.9 L292.5 506.7 L293.0 497.2 L293.5 487.5 L294.0 477.6 L294.5 467.7 L295.0 462.4 L402.0 462.4 L402.5 457.6 L403.0 447.7 L403.5 437.8 L404.0 428.1 L404.5 418.7 L405.0 409.4 L405.5 400.5 L406.0 392.0 L406.5 383.9 L407.0 376.3 L407.5 369.2 L408.0 362.7 L408.5 356.8 L409.0 351.5 L409.5 346.9 L410.0 343.0 L410.5 339.9 L411.0 337.4 L411.5 335.8 L412.0 334.9 L412.5 334.7 L413.0 335.4 L413.5 336.8 L414.0 339.0 L414.5 342.0 L415.0 345.6 L415.5 350.0 L416.0 355.1 L416.5 360.8 L417.0 367.1 L417.5 374.1 L418.0 381.5 L418.5 389.5 L419.0 397.9 L419.5 406.6 L420.0 415.8 L420.5 425.2 L421.0 434.8 L421.5 444.6 L422.0 454.5 L422.5 464.5 L423.0 474.4 L423.5 484.3 L424.0 494.1 L424.5 503.6 L425.0 512.9 L425.5 521.9 L426.0 530.6 L426.5 538.8 L427.0 546.6 L427.5 553.8 L428.0 560.5 L428.5 566.6 L429.0 572.1 L429.5 576.9 L430.0 581.0 L430.5 584.4 L431.0 587.1 L431.5 589.0 L432.0 590.1 L432.5 590.5 L433.0 590.1 L433.5 588.9 L434.0 586.9 L434.5 584.2 L435.0 580.8 L435.5 576.6 L436.0 571.8 L436.5 566.2 L437.0 560.1 L437.5 553.3 L438.0 546.0 L438.5 538.2 L439.0 530.0 L439.5 521.3 L440.0 512.3 L440.5 503.0 L441.0 493.4 L441.5 483.6 L442.0 473.7 L442.5 463.8 L443.0 453.8 L443.5 443.9 L444.0 434.1 L444.5 424.5 L445.0 415.1 L445.5 406.0 L446.0 397.3 L446.5 388.9 L447.0 381.0 L447.5 373.6 L448.0 366.7 L448.5 360.4 L449.0 354.7 L449.5 349.7 L450.0 345.4 L450.5 341.7 L451.0 338.8 L451.5 336.7 L452.0 335.3 L452.5 334.7 L453.0 334.9 L453.5 335.9 L454.0 337.6 L454.5 340.1 L455.0 343.3 L455.5 347.2 L456.0 351.9 L456.5 357.2 L457.0 363.1 L457.5 369.7 L458.0 376.8 L458.5 384.5 L459.0 392.6 L459.5 401.2 L460.0 410.1 L460.5 419.3 L461.0 428.8 L461.5 438.5 L462.0 448.4 L462.5 458.3 L463.0 468.3 L463.5 478.2 L464.0 488.0 L464.5 497.7 L465.0 507.2 L465.5 516.4 L466.0 525.3 L466.5 533.8 L467.0 541.8 L467.5 549.4 L468.0 556.4 L468.5 562.9 L469.0 568.8 L469.5 574.0 L470.0 578.6 L470.5 582.4 L471.0 585.5 L471.5 587.9 L472.0 589.5 L472.5 590.4 L473.0 590.4 L473.5 589.7 L474.0 588.2 L474.5 586.0 L475.0 583.0 L475.5 579.3 L476.0 574.8 L476.5 569.7 L477.0 564.0 L477.5 557.6 L478.0 550.6 L478.5 543.1 L479.0 535.2 L479.5 526.7 L480.0 517.9 L480.5 508.8 L481.0 499.4 L481.5 489.7 L482.0 479.9 L482.5 470.0 L483.0 460.0 L483.5 450.1 L484.0 440.2 L484.5 430.5 L485.0 420.9 L485.5 411.6 L486.0 402.6 L486.5 394.0 L487.0 385.8 L487.5 378.1 L488.0 370.9 L488.5 364.2 L489.0 358.2 L489.5 352.7 L490.0 348.0 L490.5 343.9 L491.0 340.5 L491.5 337.9 L492.0 336.1 L492.5 335.0 L493.0 334.7 L493.5 335.2 L494.0 336.4 L494.5 338.4 L495.0 341.2 L495.5 344.7 L496.0 348.9 L496.5 353.8 L497.0 359.4 L497.5 365.6 L498.0 372.4 L498.5 379.7 L499.0 387.5 L499.5 395.8 L500.0 404.5 L500.5 413.6 L501.0 422.9 L501.5 432.5 L502.0 442.3 L502.5 452.1 L503.0 462.1 L503.5 472.1 L504.0 482.0 L504.5 491.7 L505.0 501.4 L505.5 510.7 L506.0 519.8 L506.5 528.5 L507.0 536.9 L507.5 544.8 L508.0 552.1 L508.5 559.0 L509.0 565.2 L509.5 570.9 L510.0 575.8 L510.5 580.1 L511.0 583.7 L511.5 586.5 L512.0 588.6 L512.5 589.9 L513.0 590.5 L513.5 590.3 L514.0 589.3 L514.5 587.5 L515.0 584.9 L515.5 581.7 L516.0 577.7 L516.5 573.0 L517.0 567.6 L517.5 561.6 L518.0 555.0 L518.5 547.8 L519.0 540.2 L519.5 532.0 L520.0 523.4 L520.5 514.5 L521.0 505.2 L521.5 495.7 L522.0 486.0 L522.5 476.1 L523.0 466.2 L523.5 456.2 L524.0 446.3 L524.5 436.5 L525.0 426.8 L525.5 417.4 L526.0 408.2 L526.5 399.3 L527.0 390.9 L527.5 382.8 L528.0 375.3 L528.5 368.3 L529.0 361.8 L529.5 356.0 L530.0 350.8 L530.5 346.3 L531.0 342.5 L531.5 339.5 L532.0 337.1 L532.5 335.6 L533.0 334.8 L533.5 334.8 L534.0 335.6 L534.5 337.1 L535.0 339.4 L535.5 342.4 L536.0 346.2 L536.5 350.7 L537.0 355.9 L537.5 361.7 L538.0 368.1 L538.5 375.1 L539.0 382.6 L539.5 390.6 L540.0 399.1 L540.5 407.9 L541.0 417.1 L541.5 426.5 L542.0 436.2 L542.5 446.0 L543.0 455.9 L543.5 465.9 L544.0 475.8 L544.5 485.7 L545.0 495.4 L545.5 504.9 L546.0 514.2 L546.5 523.2 L547.0 531.8 L547.5 539.9 L548.0 547.6 L548.5 554.8 L549.0 561.4 L549.5 567.4 L550.0 572.8 L550.5 577.5 L551.0 581.6 L551.5 584.9 L552.0 587.4 L552.5 589.2 L553.0 590.2 L553.5 590.5 L554.0 590.0 L554.5 588.7 L555.0 586.6 L555.5 583.8 L556.0 580.2 L556.5 576.0 L557.0 571.0 L557.5 565.4 L558.0 559.2 L558.5 552.3 L559.0 545.0 L559.5 537.1 L560.0 528.8 L560.5 520.1 L561.0 511.0 L561.5 501.6 L562.0 492.0 L562.5 482.3 L563.0 472.4 L563.5 462.4 L670.5 462.4 L671.0 462.3 L671.5 452.3 L672.0 442.4 L672.5 432.6 L673.0 423.1 L673.5 413.7 L674.0 404.7 L674.5 396.0 L675.0 387.7 L675.5 379.8 L676.0 372.5 L676.5 365.7 L677.0 359.5 L677.5 353.9 L678.0 349.0 L678.5 344.8 L679.0 341.2 L679.5 338.5 L680.0 336.4 L680.5 335.2 L681.0 334.7 L681.5 335.0 L682.0 336.1 L682.5 337.9 L683.0 340.5 L683.5 343.8 L684.0 347.9 L684.5 352.6 L685.0 358.1 L685.5 364.1 L686.0 370.8 L686.5 378.0 L687.0 385.7 L687.5 393.9 L688.0 402.5 L688.5 411.5 L689.0 420.8 L689.5 430.3 L690.0 440.0 L690.5 449.9 L691.0 459.8 L691.5 469.8 L692.0 479.7 L692.5 489.5 L693.0 499.2 L693.5 508.6 L694.0 517.8 L694.5 526.6 L695.0 535.0 L695.5 543.0 L696.0 550.5 L696.5 557.5 L697.0 563.9 L697.5 569.6 L698.0 574.8 L698.5 579.2 L699.0 582.9 L699.5 586.0 L700.0 588.2 L700.5 589.7 L701.0 590.4 L701.5 590.4 L702.0 589.5 L702.5 587.9 L703.0 585.6 L703.5 582.5 L704.0 578.6 L704.5 574.1 L705.0 568.9 L705.5 563.0 L706.0 556.6 L706.5 549.5 L707.0 541.9 L707.5 533.9 L708.0 525.4 L708.5 516.5 L709.0 507.4 L709.5 497.9 L710.0 488.2 L710.5 478.4 L711.0 468.4 L711.5 458.5 L712.0 448.5 L712.5 438.7 L713.0 429.0 L713.5 419.5 L714.0 410.2 L714.5 401.3 L715.0 392.7 L715.5 384.6 L716.0 377.0 L716.5 369.8 L717.0 363.3 L717.5 357.3 L718.0 352.0 L718.5 347.3 L719.0 343.3 L719.5 340.1 L720.0 337.6 L720.5 335.9 L721.0 334.9 L721.5 334.7 L722.0 335.3 L722.5 336.7 L723.0 338.8 L723.5 341.7 L724.0 345.3 L724.5 349.6 L725.0 354.6 L725.5 360.3 L726.0 366.6 L726.5 373.4 L727.0 380.9 L727.5 388.8 L728.0 397.1 L728.5 405.9 L729.0 415.0 L729.5 424.4 L730.0 434.0 L730.5 443.8 L731.0 453.7 L731.5 463.6 L732.0 473.6 L732.5 483.5 L733.0 493.2 L733.5 502.8 L734.0 512.1 L734.5 521.2 L735.0 529.8 L735.5 538.1 L736.0 545.9 L736.5 553.2 L737.0 560.0 L737.5 566.1 L738.0 571.7 L738.5 576.5 L739.0 580.7 L739.5 584.2 L740.0 586.9 L740.5 588.9 L741.0 590.1 L741.5 590.5 L742.0 590.2 L742.5 589.0 L743.0 587.1 L743.5 584.5 L744.0 581.1 L744.5 577.0 L745.0 572.2 L745.5 566.7 L746.0 560.6 L746.5 553.9 L747.0 546.7 L747.5 538.9 L748.0 530.7 L748.5 522.1 L749.0 513.1 L749.5 503.8 L750.0 494.2 L750.5 484.5 L751.0 474.6 L751.5 464.7 L752.0 454.7 L752.5 444.8 L753.0 435.0 L753.5 425.3 L754.0 415.9 L754.5 406.8 L755.0 398.0 L755.5 389.6 L756.0 381.6 L756.5 374.2 L757.0 367.3 L757.5 360.9 L758.0 355.2 L758.5 350.1 L759.0 345.7 L759.5 342.0 L760.0 339.1 L760.5 336.9 L761.0 335.4 L761.5 334.8 L762.0 334.9 L762.5 335.7 L763.0 337.4 L763.5 339.8 L764.0 343.0 L764.5 346.9 L765.0 351.4 L765.5 356.7 L766.0 362.6 L766.5 369.1 L767.0 376.2 L767.5 383.8 L768.0 391.9 L768.5 400.4 L769.0 409.3 L769.5 418.5 L770.0 428.0 L770.5 437.7 L771.0 447.5 L771.5 457.5 L772.0 467.4 L772.5 477.4 L773.0 487.2 L773.5 496.9 L774.0 506.4 L774.5 515.6 L775.0 524.5 L775.5 533.0 L776.0 541.1 L776.5 548.8 L777.0 555.9 L777.5 562.4 L778.0 568.3 L778.5 573.6 L779.0 578.2 L779.5 582.1 L780.0 585.3 L780.5 587.7 L781.0 589.4 L781.5 590.3 L782.0 590.5 L782.5 589.8 L783.0 588.4 L783.5 586.2 L784.0 583.3 L784.5 579.6 L785.0 575.3 L785.5 570.2 L786.0 564.5 L786.5 558.2 L787.0 551.3 L787.5 543.8 L788.0 535.9 L788.5 527.5 L789.0 518.7 L789.5 509.6 L790.0 500.2 L790.5 490.5 L791.0 480.7 L791.5 470.8 L792.0 460.9 L792.5 450.9 L793.0 441.0 L793.5 431.3 L794.0 421.7 L794.5 412.4 L795.0 403.4 L795.5 394.8 L796.0 386.5 L796.5 378.8 L797.0 371.5 L797.5 364.8 L798.0 358.7 L798.5 353.2 L799.0 348.3 L799.5 344.2 L800.0 340.8 L800.5 338.1 L801.0 336.2 L801.5 335.1 L802.0 334.7 L802.5 335.1 L803.0 336.3 L803.5 338.2 L804.0 340.9 L804.5 344.4 L805.0 348.5 L805.5 353.4 L806.0 358.9 L806.5 365.0 L807.0 371.7 L807.5 379.0 L808.0 386.8 L808.5 395.1 L809.0 403.7 L809.5 412.8 L810.0 422.1 L810.5 431.6 L811.0 441.4 L811.5 451.3 L812.0 461.2 L812.5 471.2 L813.0 481.1 L813.5 490.9 L814.0 500.5 L814.5 509.9 L815.0 519.0 L815.5 527.8 L816.0 536.2 L816.5 544.1 L817.0 551.5 L817.5 558.4 L818.0 564.7 L818.5 570.4 L819.0 575.4 L819.5 579.8 L820.0 583.4 L820.5 586.3 L821.0 588.5 L821.5 589.9 L822.0 590.5 L822.5 590.3 L823.0 589.4 L823.5 587.7 L824.0 585.2 L824.5 582.0 L825.0 578.1 L825.5 573.4 L826.0 568.1 L826.5 562.2 L827.0 555.6 L827.5 548.5 L828.0 540.8 L828.5 532.7 L829.0 524.2 L829.5 515.3 L830.0 506.0 L830.5 496.5 L831.0 486.8 L831.5 477.0 L832.0 467.1 L832.5 462.4 L845.5 462.4" fill="none" stroke="#2979A8" stroke-width="1.5" stroke-linejoin="round"/>
<path d="M845 208 H864.5 M864.5 119.5 V299" stroke="#C4A836" fill="none" stroke-width="1"/>
<path d="M845 462.4 H864.5 M864.5 334.5 V590.5" stroke="#2979A8" fill="none" stroke-width="1"/>
<path d="M40 202 L52 208.5 L40 215 Z" fill="#FFC81E"/>
<path d="M846 202.5 L834 208.5 L846 214.5 Z" fill="#FFC81E"/>
<path d="M40 455.5 L52 462 L40 468.5 Z" fill="#35B8F0"/>
<path d="M437 91 L449 91 L443 103.5 Z" fill="#FFFFFF"/>
<path d="M46 76.5 L52 81.5 L46 86.5" fill="none" stroke="#2E7BE6" stroke-width="3" stroke-linejoin="miter"/>
</svg>
<span class="t" style="left:-1px;top:76px;color:#4DB8EA;letter-spacing:-0.5px">C2 V</span>
<div class="b" style="left:60px;top:70px;width:79px;height:20px;border:2px solid #E6201A;background:#050505"></div>
<span class="t" style="left:81px;top:76px;color:#fff;font-weight:bold;font-size:12px;-webkit-text-stroke:0.3px #fff">Ready</span>
<div class="b" style="left:140px;top:71px;width:23px;height:19px;border:1px solid #E8C040"></div>
<span class="t" style="left:144px;top:76px;color:#FFD030;font-weight:bold">C1</span>
<div class="b" style="left:164px;top:71px;width:22px;height:19px;border:1px solid #B8B8B8"></div>
<span class="t" style="left:167px;top:76px;color:#4DB8EA;font-weight:bold">C2</span>
<span class="t" style="left:188px;top:76px;color:#fff;letter-spacing:-0.05px">8192 samples at 800 kHz | 2020-04-07 10:03:13.500</span>
<span class="t" style="left:2.5px;top:92px;color:#4DB8EA">14.4</span>
<span class="t" style="left:2.5px;top:142px;color:#4DB8EA">12.4</span>
<span class="t" style="left:2.5px;top:193px;color:#4DB8EA">10.4</span>
<span class="t" style="left:2.5px;top:243px;color:#4DB8EA">8.4</span>
<span class="t" style="left:2.5px;top:293px;color:#4DB8EA">6.4</span>
<span class="t" style="left:2.5px;top:344px;color:#4DB8EA">4.4</span>
<span class="t" style="left:2.5px;top:394px;color:#4DB8EA">2.4</span>
<span class="t" style="left:2.5px;top:444px;color:#4DB8EA">0.4</span>
<span class="t" style="left:2.5px;top:494px;color:#4DB8EA">-1.6</span>
<span class="t" style="left:2.5px;top:545px;color:#4DB8EA">-3.6</span>
<span class="t" style="left:2.5px;top:595px;color:#4DB8EA">-5.6</span>
<span class="t" style="left:13.5px;width:60px;text-align:center;top:611.5px;color:#fff">-5 ms</span>
<span class="t" style="left:92.7px;width:60px;text-align:center;top:611.5px;color:#fff">-4 ms</span>
<span class="t" style="left:171.9px;width:60px;text-align:center;top:611.5px;color:#fff">-3 ms</span>
<span class="t" style="left:251.1px;width:60px;text-align:center;top:611.5px;color:#fff">-2 ms</span>
<span class="t" style="left:330.3px;width:60px;text-align:center;top:611.5px;color:#fff">-1 ms</span>
<span class="t" style="left:409.5px;width:60px;text-align:center;top:611.5px;color:#fff">0 ms</span>
<span class="t" style="left:488.7px;width:60px;text-align:center;top:611.5px;color:#fff">1 ms</span>
<span class="t" style="left:567.9px;width:60px;text-align:center;top:611.5px;color:#fff">2 ms</span>
<span class="t" style="left:647.1px;width:60px;text-align:center;top:611.5px;color:#fff">3 ms</span>
<span class="t" style="left:726.3px;width:60px;text-align:center;top:611.5px;color:#fff">4 ms</span>
<span class="t" style="left:805.5px;width:60px;text-align:center;top:611.5px;color:#fff">5 ms</span>
<div class="b" style="left:2px;top:609px;width:27px;height:16px;border:1px solid #A9B8CC;border-radius:2px;background:linear-gradient(#fff,#F1EEE6)"></div>
<div class="b" style="left:16px;top:610px;width:1px;height:14px;background:#A8A8A8"></div>
<span class="t" style="left:4.5px;top:611.5px;font-weight:bold;-webkit-text-stroke:0.4px #000">X</span>
<svg class="b" style="left:19px;top:616.3px" width="7.4" height="4" viewBox="0 0 8 4"><path d="M0 0 H8 L4 4 Z" fill="#111"/></svg>
<svg class="b" style="left:0;top:0" width="1052" height="628" viewBox="0 0 1052 628">
<g><line x1="727.8" y1="83" x2="731.8" y2="87.5" stroke="#C8C4B8" stroke-width="2.2" stroke-linecap="round"/><circle cx="723.8" cy="79" r="5.2" fill="#2B5CAE" stroke="#E4ECF8" stroke-width="1.8"/><text x="723.9" y="82" font-size="8" font-weight="bold" text-anchor="middle" font-family="Liberation Sans, sans-serif" fill="#DDE8F8">1</text></g>
<g><line x1="811.4" y1="83" x2="815.4" y2="87.5" stroke="#C8C4B8" stroke-width="2.2" stroke-linecap="round"/><circle cx="807.4" cy="79" r="5.2" fill="#2B5CAE" stroke="#E4ECF8" stroke-width="1.8"/><path d="M804 79.5 h7 M805 81.5 h5" stroke="#9CC0F0" stroke-width="1"/></g>
<rect x="739" y="82.5" width="12" height="3" fill="#8C8C8C"/><path d="M741 72 L747.5 74.5 L743.5 78 Z" fill="#2453A8"/><path d="M744 75 L749 80.5" stroke="#2453A8" stroke-width="1.6"/>
<rect x="759" y="82.5" width="12" height="3" fill="#8C8C8C"/><path d="M761.5 72.5 V81 M761.5 76.5 H770" stroke="#2453A8" stroke-width="1.2" fill="none"/>
<rect x="779" y="82.5" width="12" height="3" fill="#8C8C8C"/><path d="M781.5 72.5 V81 M781.5 74.5 H791.5 M781.5 78 H788" stroke="#2453A8" stroke-width="1.2" fill="none"/>
</svg>
<div class="b" style="left:825px;top:72px;width:20px;height:18px;border:1px solid #B8C8DE;border-radius:3px;background:#EDF2F8"></div>
<svg class="b" style="left:828px;top:74px" width="14" height="14" viewBox="0 0 16 16.4"><path d="M7 0.8 L9 0.8 L9.5 2.6 L11 3.2 L12.6 2.2 L14 3.6 L13 5.2 L13.6 6.7 L15.4 7.2 L15.4 9.2 L13.6 9.7 L13 11.2 L14 12.8 L12.6 14.2 L11 13.2 L9.5 13.8 L9 15.6 L7 15.6 L6.5 13.8 L5 13.2 L3.4 14.2 L2 12.8 L3 11.2 L2.4 9.7 L0.6 9.2 L0.6 7.2 L2.4 6.7 L3 5.2 L2 3.6 L3.4 2.2 L5 3.2 L6.5 2.6 Z" fill="#B9BDC4" stroke="#8A9098" stroke-width="0.8"/><circle cx="8" cy="8.2" r="2.6" fill="#EEF1F6" stroke="#8A9098" stroke-width="0.8"/><path d="M5.2 6.2 A3.4 3.4 0 0 0 8.6 11.4" fill="none" stroke="#5A5E66" stroke-width="1.4"/></svg>
<div class="b" style="left:848px;top:72px;width:22px;height:17px;border:1px solid #A9BCD6;border-radius:3px;background:#fff"></div>
<span class="t" style="left:853.5px;top:76px;font-weight:bold;-webkit-text-stroke:0.4px #000">Y</span>
<div class="b" style="left:866px;top:71px;width:186px;height:557px;background:#ECE9D8"></div>
<div class="b" style="left:866px;top:71px;width:186px;height:1px;background:#FBFBF7"></div>
<div class="b" style="left:1025px;top:90px;width:8px;height:94px;background:#F7F6F0"></div>
<div class="b" style="left:1033px;top:90px;width:16px;height:536px;background:#FDFDFB"></div>
<div class="b" style="left:1049px;top:71px;width:3px;height:557px;background:#F3F2EA"></div>
<div class="b" style="left:1048px;top:90px;width:1px;height:536px;background:#DEDDD2"></div>
<div class="b" style="left:866px;top:71px;width:3px;height:557px;background:linear-gradient(90deg,#F8F7F1,#EFEDE0)"></div>
<div class="b" style="left:866px;top:626px;width:186px;height:1px;background:#A9A89C"></div>
<div class="b" style="left:866px;top:627px;width:186px;height:1px;background:#FBFBF8"></div>
<svg class="b" style="left:870px;top:77px" width="12" height="8" viewBox="0 0 12 8"><path d="M0.8 2.4 H7 V1.2 L11 4.1 L7 7 V5.8 H0.8 Z" fill="#7CC06C" stroke="#8ECB80" stroke-width="0.8" stroke-linejoin="round"/></svg>
<div class="b" style="left:868px;top:90px;width:161px;height:93px;background:#ECE9D8;border:4px solid #fff;border-left-width:1px;border-right-width:5px"></div>
<div class="cb" style="left:873px;top:96px"><svg width="9" height="9" viewBox="0 0 9 9"><path d="M1 4 L3.5 6.5 L8 1.5" fill="none" stroke="#21A121" stroke-width="2"/></svg></div>
<span class="t" style="left:890.5px;top:97px;">Time</span>
<div class="gbtn" style="left:1003px;top:95px"></div>
<svg class="b" style="left:1007.5px;top:96.8px" width="12" height="11.5" viewBox="0 0 16 16.4"><path d="M7 0.8 L9 0.8 L9.5 2.6 L11 3.2 L12.6 2.2 L14 3.6 L13 5.2 L13.6 6.7 L15.4 7.2 L15.4 9.2 L13.6 9.7 L13 11.2 L14 12.8 L12.6 14.2 L11 13.2 L9.5 13.8 L9 15.6 L7 15.6 L6.5 13.8 L5 13.2 L3.4 14.2 L2 12.8 L3 11.2 L2.4 9.7 L0.6 9.2 L0.6 7.2 L2.4 6.7 L3 5.2 L2 3.6 L3.4 2.2 L5 3.2 L6.5 2.6 Z" fill="#B9BDC4" stroke="#8A9098" stroke-width="0.8"/><circle cx="8" cy="8.2" r="2.6" fill="#EEF1F6" stroke="#8A9098" stroke-width="0.8"/><path d="M5.2 6.2 A3.4 3.4 0 0 0 8.6 11.4" fill="none" stroke="#4A4E56" stroke-width="1.6"/><path d="M10.6 9.6 L12.2 12.4" stroke="#5A5E66" stroke-width="1.6"/></svg>
<span class="t" style="left:876px;top:115.5px;">Position:</span>
<div class="combo" style="left:934px;top:112px;width:90px;height:20px"><span class="v" style="left:3px;top:3.5px">0 s</span><div class="dd"><svg width="10" height="7" viewBox="0 0 10 7"><path d="M1 1 L5 5 L9 1" fill="none" stroke="#46587F" stroke-width="2.2"/></svg></div></div>
<span class="t" style="left:876px;top:136.5px;">Base:</span>
<div class="combo" style="left:934px;top:133px;width:90px;height:20px"><span class="v" style="left:3px;top:3.5px">1 ms/div</span><div class="dd"><svg width="10" height="7" viewBox="0 0 10 7"><path d="M1 1 L5 5 L9 1" fill="none" stroke="#46587F" stroke-width="2.2"/></svg></div></div>
<div class="wbtn" style="left:874px;top:154px;width:150px;height:22px"></div>
<svg class="b" style="left:944px;top:158px" width="10" height="15" viewBox="0 0 10 15"><path d="M3 0.5 H7 V10 H9.3 L5 14.3 L0.7 10 H3 Z" fill="#5E9E54" stroke="#4C8A44" stroke-width="0.6" stroke-linejoin="round"/><rect x="4.2" y="1" width="1.6" height="10" fill="#9BD08E"/></svg>
<div class="b" style="left:1033px;top:90px;width:16px;height:15px;border:1px solid #EAE9E0;border-radius:2px;background:#F6F5F0"></div>
<svg class="b" style="left:1036.5px;top:94px" width="9" height="6" viewBox="0 0 9 6"><path d="M1 5 L4.5 1.5 L8 5" fill="none" stroke="#C9C8BE" stroke-width="1.6"/></svg>
<div class="b" style="left:1034px;top:609px;width:15px;height:16px;border:1px solid #E2E1D8;border-radius:2px;background:#F4F3EE"></div>
<svg class="b" style="left:1037px;top:614.5px" width="9" height="6" viewBox="0 0 9 6"><path d="M1 1 L4.5 4.5 L8 1" fill="none" stroke="#BDBCB2" stroke-width="1.6"/></svg>
<svg class="b" style="left:874px;top:187.5px" width="14" height="14" viewBox="0 0 16 16.4"><path d="M7 0.8 L9 0.8 L9.5 2.6 L11 3.2 L12.6 2.2 L14 3.6 L13 5.2 L13.6 6.7 L15.4 7.2 L15.4 9.2 L13.6 9.7 L13 11.2 L14 12.8 L12.6 14.2 L11 13.2 L9.5 13.8 L9 15.6 L7 15.6 L6.5 13.8 L5 13.2 L3.4 14.2 L2 12.8 L3 11.2 L2.4 9.7 L0.6 9.2 L0.6 7.2 L2.4 6.7 L3 5.2 L2 3.6 L3.4 2.2 L5 3.2 L6.5 2.6 Z" fill="#B9BDC4" stroke="#8A9098" stroke-width="0.8"/><circle cx="8" cy="8.2" r="2.6" fill="#EEF1F6" stroke="#8A9098" stroke-width="0.8"/><path d="M5.2 6.2 A3.4 3.4 0 0 0 8.6 11.4" fill="none" stroke="#6A6E76" stroke-width="1.4"/></svg>
<span class="t" style="left:893px;top:189px;">Options</span>
<svg class="b" style="left:1017px;top:193px" width="8" height="4" viewBox="0 0 8 4"><path d="M0 0 H8 L4 4 Z" fill="#111"/></svg>
<div class="btn" style="left:870px;top:208px;width:158px;height:22px"></div>
<svg class="b" style="left:874px;top:211.5px" width="14" height="14.5" viewBox="0 0 14 14.5"><defs><linearGradient id="pg" x1="0" y1="0" x2="0" y2="1"><stop offset="0" stop-color="#98E060"/><stop offset="1" stop-color="#5CBC2A"/></linearGradient></defs><path d="M5 0.7 H9.2 V5.2 H13.4 V9.4 H9.2 V13.8 H5 V9.4 H0.6 V5.2 H5 Z" fill="url(#pg)" stroke="#6CC63A" stroke-width="0.9" stroke-linejoin="round"/></svg>
<span class="t" style="left:893px;top:214px;">Add Channel</span>
<svg class="b" style="left:1017px;top:218px" width="8" height="4" viewBox="0 0 8 4"><path d="M0 0 H8 L4 4 Z" fill="#111"/></svg>
<div class="b" style="left:869px;top:232px;width:160px;height:68px;border:4px solid #FCCF14;background:#ECE9D8"></div>
<div class="cb" style="left:873px;top:238px"><svg width="9" height="9" viewBox="0 0 9 9"><path d="M1 4 L3.5 6.5 L8 1.5" fill="none" stroke="#21A121" stroke-width="2"/></svg></div>
<span class="t" style="left:890.5px;top:239px;letter-spacing:0.1px">Channel 1 (1±)</span>
<div class="gbtn" style="left:1003px;top:237px"></div>
<svg class="b" style="left:1007.5px;top:238.8px" width="12" height="11.5" viewBox="0 0 16 16.4"><path d="M7 0.8 L9 0.8 L9.5 2.6 L11 3.2 L12.6 2.2 L14 3.6 L13 5.2 L13.6 6.7 L15.4 7.2 L15.4 9.2 L13.6 9.7 L13 11.2 L14 12.8 L12.6 14.2 L11 13.2 L9.5 13.8 L9 15.6 L7 15.6 L6.5 13.8 L5 13.2 L3.4 14.2 L2 12.8 L3 11.2 L2.4 9.7 L0.6 9.2 L0.6 7.2 L2.4 6.7 L3 5.2 L2 3.6 L3.4 2.2 L5 3.2 L6.5 2.6 Z" fill="#B9BDC4" stroke="#8A9098" stroke-width="0.8"/><circle cx="8" cy="8.2" r="2.6" fill="#EEF1F6" stroke="#8A9098" stroke-width="0.8"/><path d="M5.2 6.2 A3.4 3.4 0 0 0 8.6 11.4" fill="none" stroke="#4A4E56" stroke-width="1.6"/><path d="M10.6 9.6 L12.2 12.4" stroke="#5A5E66" stroke-width="1.6"/></svg>
<span class="t" style="left:876.5px;top:258px;letter-spacing:0.35px">Offset:</span>
<div class="combo" style="left:934px;top:254px;width:90px;height:20px"><span class="v" style="left:3px;top:3.5px">135 mV</span><div class="dd"><svg width="10" height="7" viewBox="0 0 10 7"><path d="M1 1 L5 5 L9 1" fill="none" stroke="#46587F" stroke-width="2.2"/></svg></div></div>
<span class="t" style="left:876px;top:279px;">Range:</span>
<div class="combo" style="left:934px;top:275px;width:90px;height:20px"><span class="v" style="left:3px;top:3.5px">50 mV/div</span><div class="dd"><svg width="10" height="7" viewBox="0 0 10 7"><path d="M1 1 L5 5 L9 1" fill="none" stroke="#46587F" stroke-width="2.2"/></svg></div></div>
<div class="b" style="left:869px;top:301px;width:160px;height:68px;border:4px solid #14B9EE;background:#ECE9D8"></div>
<div class="cb" style="left:873px;top:307px"><svg width="9" height="9" viewBox="0 0 9 9"><path d="M1 4 L3.5 6.5 L8 1.5" fill="none" stroke="#21A121" stroke-width="2"/></svg></div>
<span class="t" style="left:890.5px;top:308px;letter-spacing:0.1px">Channel 2 (2±)</span>
<div class="gbtn" style="left:1003px;top:306px"></div>
<svg class="b" style="left:1007.5px;top:307.8px" width="12" height="11.5" viewBox="0 0 16 16.4"><path d="M7 0.8 L9 0.8 L9.5 2.6 L11 3.2 L12.6 2.2 L14 3.6 L13 5.2 L13.6 6.7 L15.4 7.2 L15.4 9.2 L13.6 9.7 L13 11.2 L14 12.8 L12.6 14.2 L11 13.2 L9.5 13.8 L9 15.6 L7 15.6 L6.5 13.8 L5 13.2 L3.4 14.2 L2 12.8 L3 11.2 L2.4 9.7 L0.6 9.2 L0.6 7.2 L2.4 6.7 L3 5.2 L2 3.6 L3.4 2.2 L5 3.2 L6.5 2.6 Z" fill="#B9BDC4" stroke="#8A9098" stroke-width="0.8"/><circle cx="8" cy="8.2" r="2.6" fill="#EEF1F6" stroke="#8A9098" stroke-width="0.8"/><path d="M5.2 6.2 A3.4 3.4 0 0 0 8.6 11.4" fill="none" stroke="#4A4E56" stroke-width="1.6"/><path d="M10.6 9.6 L12.2 12.4" stroke="#5A5E66" stroke-width="1.6"/></svg>
<span class="t" style="left:876.5px;top:327px;letter-spacing:0.35px">Offset:</span>
<div class="combo" style="left:934px;top:323px;width:90px;height:20px"><span class="v" style="left:3px;top:3.5px">-4.4 V</span><div class="dd"><svg width="10" height="7" viewBox="0 0 10 7"><path d="M1 1 L5 5 L9 1" fill="none" stroke="#46587F" stroke-width="2.2"/></svg></div></div>
<span class="t" style="left:876px;top:348px;">Range:</span>
<div class="combo" style="left:934px;top:344px;width:90px;height:20px"><span class="v" style="left:3px;top:3.5px">2 V/div</span><div class="dd"><svg width="10" height="7" viewBox="0 0 10 7"><path d="M1 1 L5 5 L9 1" fill="none" stroke="#46587F" stroke-width="2.2"/></svg></div></div>
</div></body></html>
